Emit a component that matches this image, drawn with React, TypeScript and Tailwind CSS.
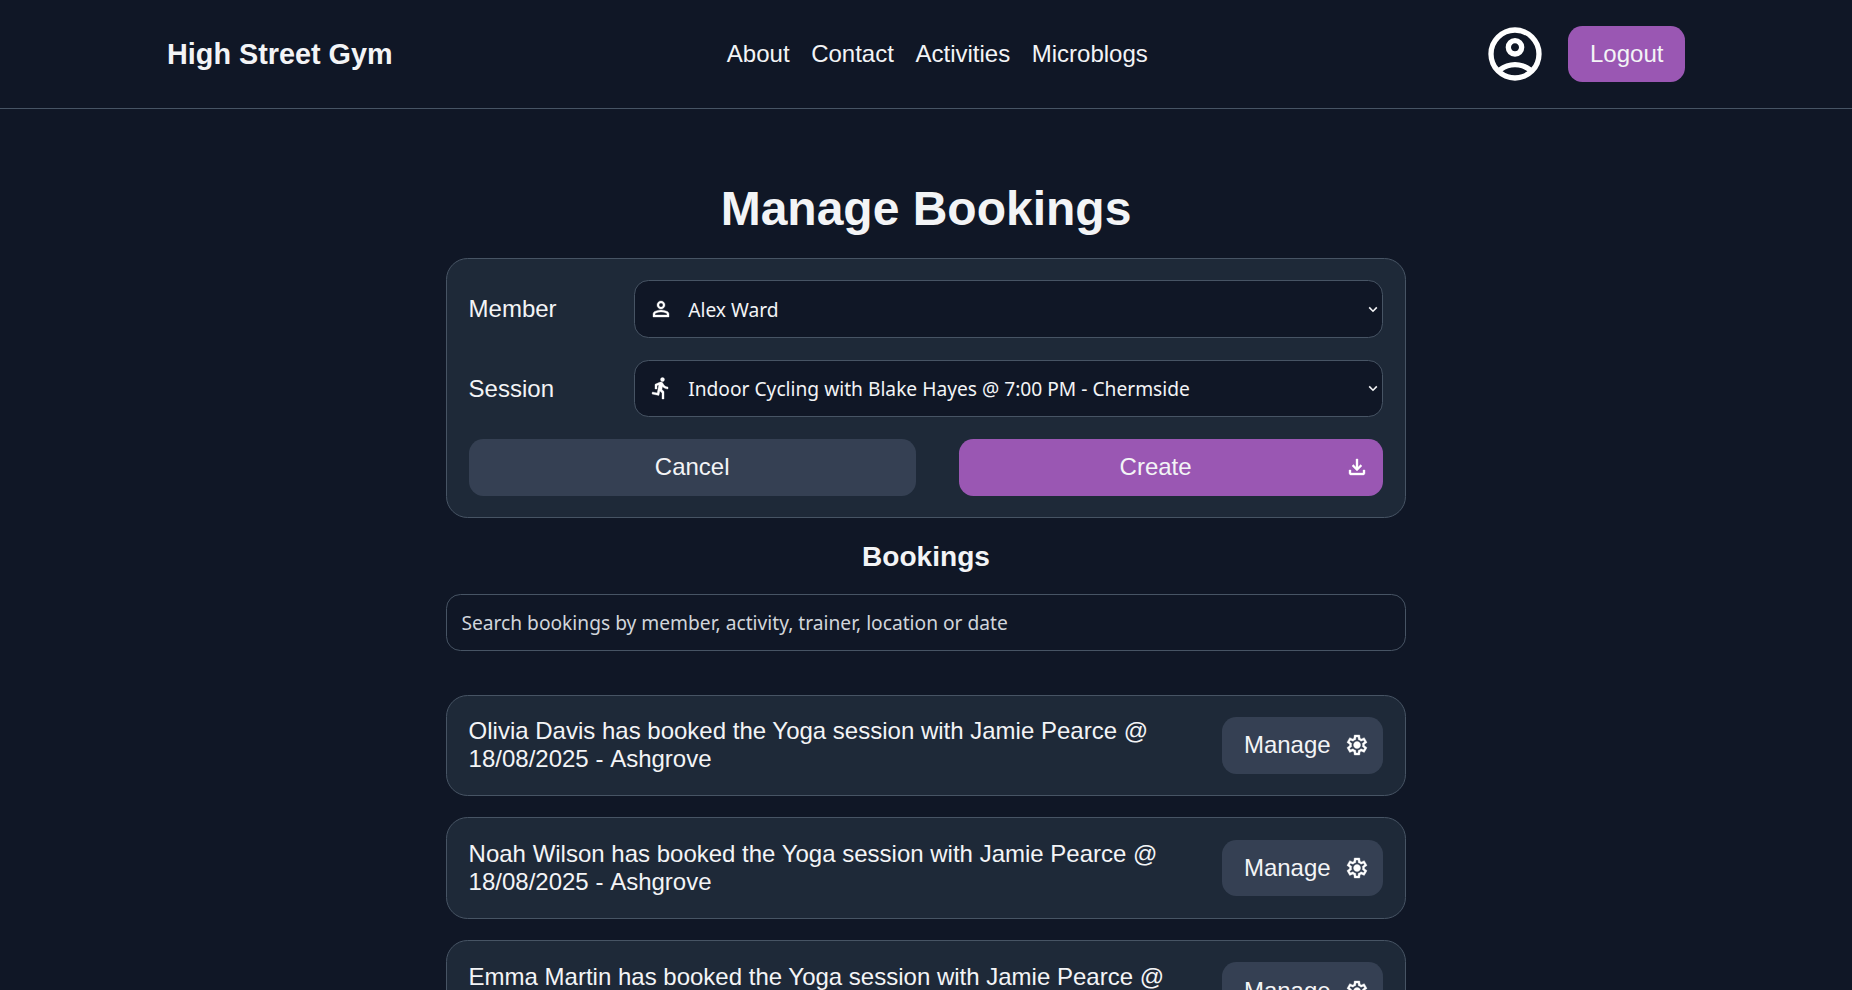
import type { ReactNode } from "react";

const bookings = [
  { member: "Olivia Davis", activity: "Yoga", trainer: "Jamie Pearce", date: "18/08/2025", location: "Ashgrove" },
  { member: "Noah Wilson", activity: "Yoga", trainer: "Jamie Pearce", date: "18/08/2025", location: "Ashgrove" },
  { member: "Emma Martin", activity: "Yoga", trainer: "Jamie Pearce", date: "18/08/2025", location: "Ashgrove" },
];

const icons = {
  account:
    "M234-276q51-39 114-61.500T480-360q69 0 132 22.500T726-276q35-41 54.500-93T800-480q0-133-93.500-226.500T480-800q-133 0-226.500 93.500T160-480q0 59 19.500 111t54.500 93Zm246-164q-59 0-99.500-40.500T340-580q0-59 40.500-99.500T480-720q59 0 99.500 40.500T620-580q0 59-40.500 99.500T480-440Zm0 360q-83 0-156-31.500T197-197q-54-54-85.500-127T80-480q0-83 31.500-156T197-763q54-54 127-85.500T480-880q83 0 156 31.500T763-763q54 54 85.500 127T880-480q0 83-31.500 156T763-197q-54 54-127 85.500T480-80Zm0-80q53 0 100-15.500t86-44.500q-39-29-86-44.500T480-280q-53 0-100 15.500T294-220q39 29 86 44.500T480-160Zm0-360q26 0 43-17t17-43q0-26-17-43t-43-17q-26 0-43 17t-17 43q0 26 17 43t43 17Z",
  person:
    "M480-480q-66 0-113-47t-47-113q0-66 47-113t113-47q66 0 113 47t47 113q0 66-47 113t-113 47ZM160-160v-112q0-34 17.500-62.500T224-378q62-31 126-46.500T480-440q66 0 130 15.500T736-378q29 15 46.500 43.500T800-272v112H160Zm80-80h480v-32q0-11-5.500-20T700-306q-54-27-109-40.500T480-360q-56 0-111 13.500T260-306q-9 5-14.500 14t-5.500 20v32Zm240-320q33 0 56.500-23.500T560-640q0-33-23.500-56.500T480-720q-33 0-56.500 23.500T400-640q0 33 23.500 56.500T480-560Z",
  run:
    "M520-40v-240l-84-80-40 176-276-56 16-80 192 40 64-324-72 28v136h-80v-188l158-68q35-15 51.500-19.500T480-720q21 0 39 11t29 29l40 64q26 42 70.500 69T760-520v80q-66 0-123.500-27.500T540-540l-24 120 84 80v300h-80Zm20-700q-33 0-56.500-23.500T460-820q0-33 23.500-56.500T540-900q33 0 56.500 23.500T620-820q0 33-23.500 56.500T540-740Z",
  save:
    "M480-320 280-520l56-58 104 104v-326h80v326l104-104 56 58-200 200ZM240-160q-33 0-56.500-23.500T160-240v-120h80v120h480v-120h80v120q0 33-23.500 56.500T720-160H240Z",
  settings:
    "m370-80-16-128q-13-5-24.500-12T307-235l-119 50L78-375l103-78q-1-7-1-13.500v-27q0-6.500 1-13.500L78-585l110-190 119 50q11-8 23-15t24-12l16-128h220l16 128q13 5 24.500 12t22.500 15l119-50 110 190-103 78q1 7 1 13.500v27q0 6.500-2 13.500l103 78-110 190-118-50q-11 8-23 15t-24 12L590-80H370Zm70-80h79l14-106q31-8 57.500-23.500T639-327l99 41 39-68-86-65q5-14 7-29.500t2-31.500q0-16-2-31.500t-7-29.500l86-65-39-68-99 42q-22-23-48.500-38.500T533-694l-13-106h-79l-14 106q-31 8-57.500 23.500T321-633l-99-41-39 68 86 64q-5 15-7 30t-2 32q0 16 2 31t7 30l-86 65 39 68 99-42q22 23 48.500 38.500T427-266l13 106Zm42-180q58 0 99-41t41-99q0-58-41-99t-99-41q-59 0-99.500 41T342-480q0 58 40.500 99t99.500 41Z",
};

function Icon({ name, className = "size-6 stroke-white" }: { name: keyof typeof icons; className?: string }) {
  return (
    <svg viewBox="0 -960 960 960" className={`shrink-0 fill-white ${className}`} strokeWidth="14">
      <path d={icons[name]} />
    </svg>
  );
}

function Chevron() {
  return (
    <svg viewBox="0 0 10 8" className="h-2 w-2.5 fill-none stroke-[#f3f4f6]" strokeWidth="1.600">
      <path d="M1.200 2.400 5 6.200 8.800 2.400" />
    </svg>
  );
}

function SelectField({ icon, children }: { icon: keyof typeof icons; children: ReactNode }) {
  return (
    <div className="flex h-[57.800px] flex-1 items-center rounded-[14.400px] border border-[#475464] bg-[#101726] pr-[4px] pl-[13.800px] font-['Noto_Sans',sans-serif] text-[19.200px]">
      <Icon name={icon} />
      <span className="ml-[15.200px] flex-1 pt-px">{children}</span>
      <Chevron />
    </div>
  );
}

export default function App() {
  return (
    <div className="h-[990px] overflow-hidden bg-[#101726] font-['Liberation_Sans',Arial,sans-serif] text-[24px] leading-[28px] text-[#f3f4f6]">
      <header className="h-[109px] border-b border-[#475464]">
        <div className="mx-auto flex h-[108px] w-[1518px] items-center justify-between">
          <span className="text-[28.800px] font-bold">High Street Gym</span>
          <nav className="flex gap-[21.600px]">
            <a>About</a>
            <a>Contact</a>
            <a>Activities</a>
            <a>Microblogs</a>
          </nav>
          <div className="flex items-center gap-[21.600px]">
            <Icon name="account" className="ml-[0.800px] size-16" />
            <button className="h-[56.400px] rounded-[14.400px] bg-[#9a57b3] px-[21.600px]">Logout</button>
          </div>
        </div>
      </header>

      <main className="mx-auto flex w-[960px] flex-col pt-[72px]">
        <h1 className="text-center text-[48px] leading-[55px] font-bold">Manage Bookings</h1>

        <section className="mt-[21.600px] flex flex-col gap-[21.600px] rounded-[21.600px] border border-[#475464] bg-[#1e2938] p-[21.600px]">
          <div className="flex items-center">
            <label className="w-[165.600px]">Member</label>
            <SelectField icon="person">Alex Ward</SelectField>
          </div>
          <div className="flex items-center">
            <label className="w-[165.600px] pt-px">Session</label>
            <SelectField icon="run">Indoor Cycling with Blake Hayes @ 7:00 PM - Chermside</SelectField>
          </div>
          <div className="flex gap-[43.200px]">
            <button className="h-[56.800px] w-[447.200px] rounded-[14.400px] bg-[#354053]">Cancel</button>
            <button className="flex h-[56.800px] flex-1 items-center gap-[14.400px] rounded-[14.400px] bg-[#9a57b3] pr-[14.400px] pl-[21.600px]">
              <span className="flex-1 text-center">Create</span>
              <Icon name="save" />
            </button>
          </div>
        </section>

        <h2 className="mt-[21.600px] text-center text-[28.080px] leading-[33px] font-bold">Bookings</h2>

        <input
          placeholder="Search bookings by member, activity, trainer, location or date"
          className="mt-[21px] h-[57px] rounded-[14.400px] border border-[#475464] bg-[#101726] px-[14.400px] font-['Noto_Sans',sans-serif] text-[19.200px] placeholder:text-[#d1d5db]"
        />

        <div className="mt-[43.700px] flex flex-col gap-[21.300px]">
          {bookings.map((b) => (
            <article
              key={b.member}
              className="flex h-[101.400px] shrink-0 items-center justify-between rounded-[21.600px] border border-[#475464] bg-[#1e2938] px-[21.600px]"
            >
              <p className="w-[710px]">
                {b.member} has booked the {b.activity} session with {b.trainer} @ {b.date} -{" "}
                <span className="ml-[0.100px]">{b.location}</span>
              </p>
              <button className="flex h-[56.800px] items-center gap-[14.400px] rounded-[14.400px] bg-[#354053] pr-[14.400px] pl-[21.600px]">
                Manage
                <Icon name="settings" />
              </button>
            </article>
          ))}
        </div>
      </main>
    </div>
  );
}
